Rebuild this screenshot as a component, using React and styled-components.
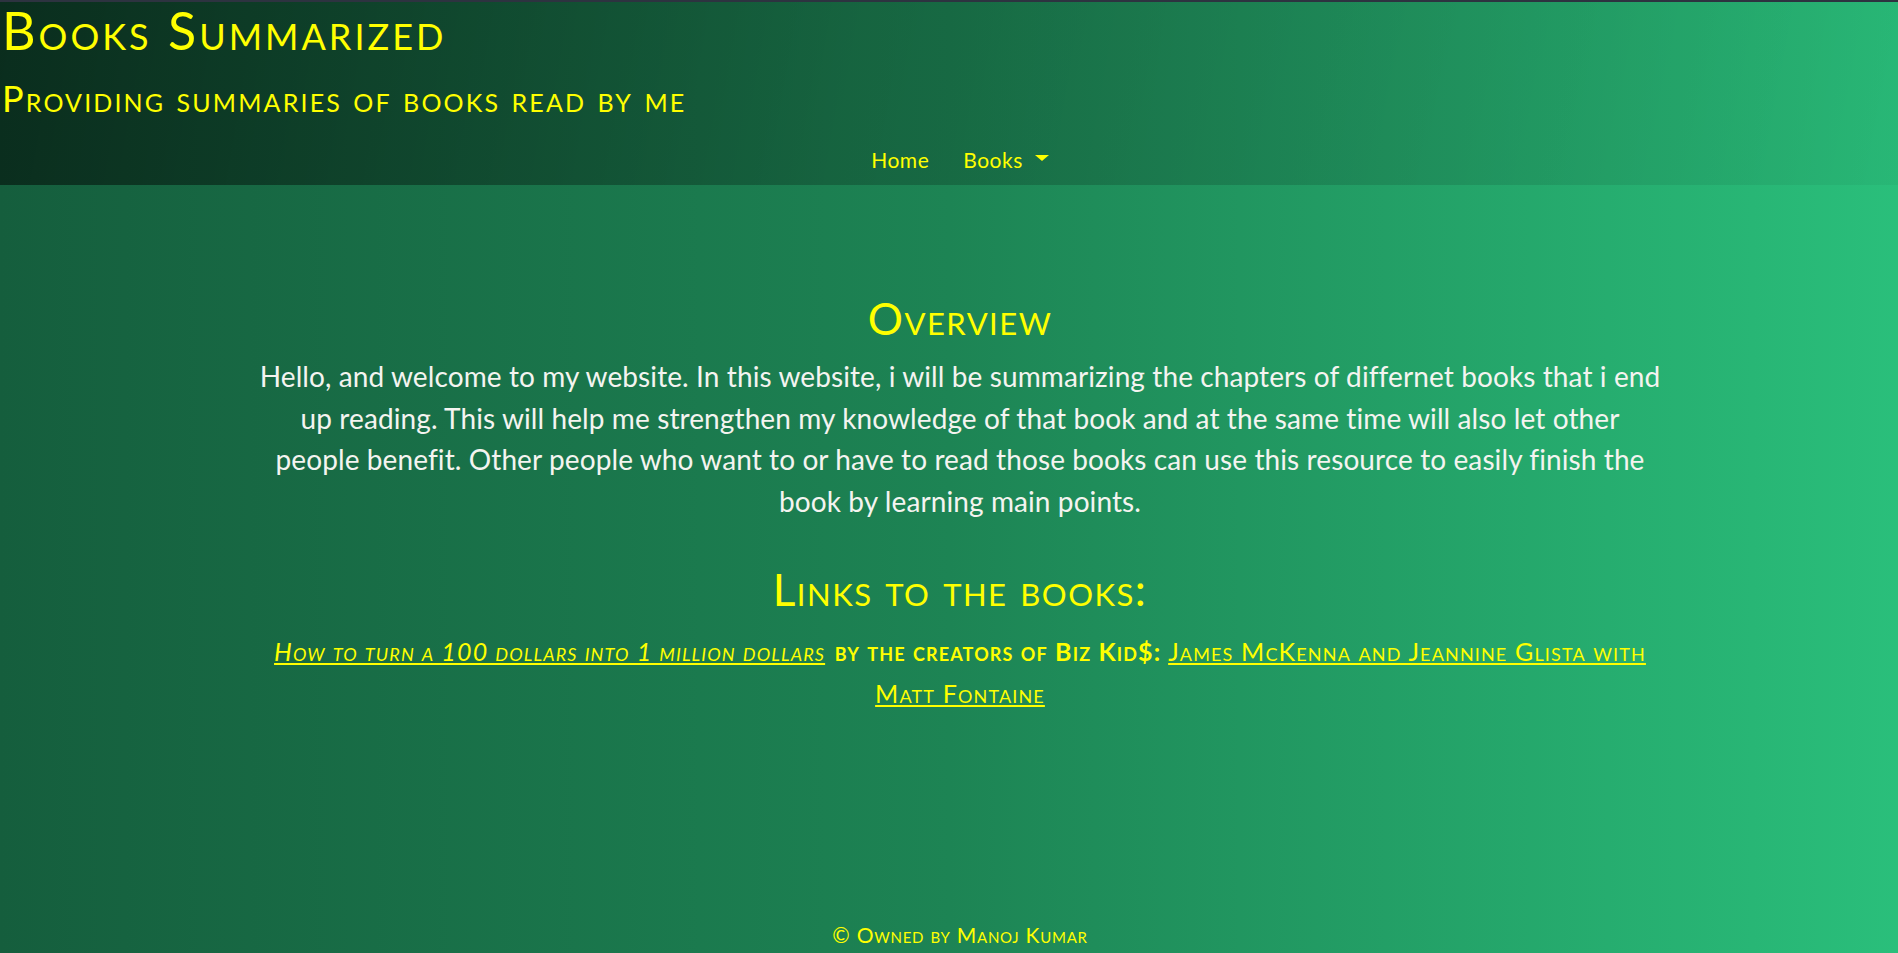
import React from 'react';
import styled, { createGlobalStyle } from 'styled-components';

const GlobalStyle = createGlobalStyle`
    html, body {
        margin: 0;
        padding: 0;
    }
    body {
        font-family: Lato, "Open Sans", sans-serif;
        background: linear-gradient(90deg, #155e3d 0%, #1d8454 50%, #2abf7b 100%);
        min-height: 100vh;
    }
`;

const Page = styled.div`
    min-height: 100vh;
    display: flex;
    flex-direction: column;
    border-top: 2px solid #2d3340;
    box-sizing: border-box;
`;

const HeaderStyled = styled.header`
    height: 183px;
    background: linear-gradient(100deg, rgba(0, 0, 0, 0.52) 0%, rgba(0, 0, 0, 0.22) 45%, rgba(0, 0, 0, 0.04) 100%);
    display: flex;
    flex-direction: column;
`;

const Title = styled.h1`
    margin: 0;
    padding-left: 2px;
    font-size: 52px;
    font-weight: 400;
    font-variant: small-caps;
    letter-spacing: 3px;
    color: #ffff00;
    line-height: 56px;
`;

const SubTitle = styled.h3`
    margin: 18px 0 0;
    padding-left: 2px;
    font-size: 36px;
    font-weight: 400;
    font-variant: small-caps;
    letter-spacing: 2.15px;
    color: #ffff00;
    line-height: 44px;
`;

const NavStyled = styled.nav`
    display: flex;
    justify-content: center;
    gap: 34px;
    margin-top: 27px;
    padding-left: 22px;
`;

const NavLink = styled.a`
    color: #ffff00;
    font-size: 21px;
    letter-spacing: 0.5px;
    text-decoration: none;
    display: flex;
    align-items: center;
`;

const Caret = styled.span`
    display: inline-block;
    margin-left: 12px;
    margin-top: -4px;
    border-top: 6px solid #ffff00;
    border-left: 7px solid transparent;
    border-right: 7px solid transparent;
`;

const Main = styled.main`
    flex: 1;
    width: 1404px;
    margin: 0 auto;
    padding: 105px 0 0 22px;
    text-align: center;
`;

const Heading = styled.h2`
    margin: 0 0 10px;
    font-size: 44px;
    font-weight: 400;
    font-variant: small-caps;
    letter-spacing: 1.5px;
    color: #ffff00;
    line-height: 56px;
`;

const Paragraph = styled.p`
    margin: 0 0 38px;
    color: #f4f4f0;
    font-size: 28px;
    letter-spacing: 0.1px;
    line-height: 41.7px;
`;

const LinkLine = styled.p`
    margin: 13px 0 0;
    color: #ffff00;
    font-size: 25px;
    letter-spacing: 1.15px;
    line-height: 42px;
    font-variant: small-caps;
`;

const BookLink = styled.a`
    color: #ffff00;
    text-decoration: underline;
    font-style: ${(p) => (p.$italic ? 'italic' : 'normal')};
    margin-right: ${(p) => (p.$italic ? '2px' : '0')};
`;

const Bold = styled.b`
    font-weight: 700;
`;

const Footer = styled.footer`
    text-align: center;
    color: #ffff00;
    font-size: 21px;
    letter-spacing: 0.75px;
    font-variant: small-caps;
    padding: 0 0 6px 22px;
`;

export default function App() {
    return (
        <Page>
            <GlobalStyle />
            <HeaderStyled>
                <Title>Books Summarized</Title>
                <SubTitle>Providing summaries of books read by me</SubTitle>
                <NavStyled>
                    <NavLink href="#">Home</NavLink>
                    <NavLink href="#">Books<Caret /></NavLink>
                </NavStyled>
            </HeaderStyled>
            <Main>
                <Heading>Overview</Heading>
                <Paragraph>
                    Hello, and welcome to my website. In this website, i will be summarizing the chapters of differnet books that i end up reading. This will help me strengthen my knowledge of that book and at the same time will also let other people benefit. Other people who want to or have to read those books can use this resource to easily finish the book by learning main points.
                </Paragraph>
                <Heading>Links to the books:</Heading>
                <LinkLine>
                    <BookLink href="#" $italic>How to turn a 100 dollars into 1 million dollars</BookLink>{' '}
                    <Bold>by the creators of Biz Kid$:</Bold>{' '}
                    <BookLink href="#">James McKenna and Jeannine Glista with Matt Fontaine</BookLink>
                </LinkLine>
            </Main>
            <Footer>© Owned by Manoj Kumar</Footer>
        </Page>
    );
}
